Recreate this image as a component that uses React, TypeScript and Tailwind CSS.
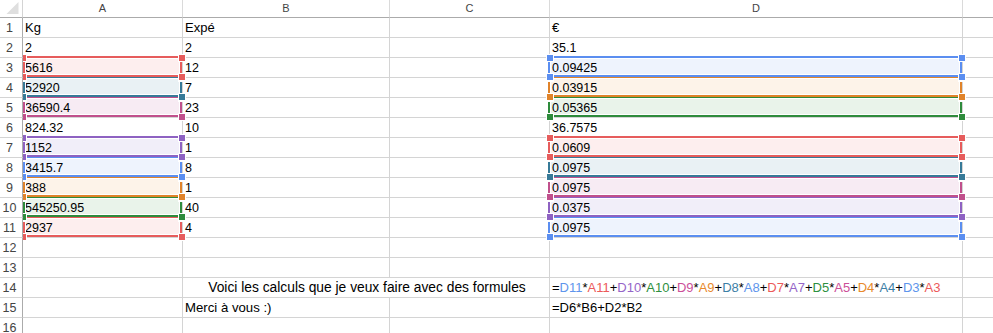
import React from "react";

type ColorKey = "red" | "teal" | "magenta" | "purple" | "blue" | "orange" | "green";

const COLORS: Record<ColorKey, { border: string; fill: string; handle: string; text: string }> = {
  red: { border: "border-[#e65c5c]", fill: "bg-[#fdeeee]", handle: "bg-[#e65c5c]", text: "text-[#ec5a5a]" },
  teal: { border: "border-[#377a98]", fill: "bg-[#e9f1f4]", handle: "bg-[#377a98]", text: "text-[#3d7fa6]" },
  magenta: { border: "border-[#c0508c]", fill: "bg-[#f7ebf3]", handle: "bg-[#c0508c]", text: "text-[#cc4f98]" },
  purple: { border: "border-[#8e62c2]", fill: "bg-[#f1eef9]", handle: "bg-[#8e62c2]", text: "text-[#9565c8]" },
  blue: { border: "border-[#5b8ef0]", fill: "bg-[#eef3fd]", handle: "bg-[#5b8ef0]", text: "text-[#5e95ec]" },
  orange: { border: "border-[#e0832a]", fill: "bg-[#fdf3e9]", handle: "bg-[#e0832a]", text: "text-[#e88a2c]" },
  green: { border: "border-[#2e8b3c]", fill: "bg-[#e9f3ea]", handle: "bg-[#2e8b3c]", text: "text-[#2e9040]" },
};

const Z: Record<number, string> = {
  3: "z-[19]",
  4: "z-[18]",
  5: "z-[17]",
  6: "z-[16]",
  7: "z-[15]",
  8: "z-[14]",
  9: "z-[13]",
  10: "z-[12]",
  11: "z-[11]",
};

type Row = {
  n: number;
  a?: string;
  b?: string;
  d?: string;
  ac?: ColorKey;
  dc?: ColorKey;
};

const ROWS: Row[] = [
  { n: 1, a: "Kg", b: "Expé", d: "€" },
  { n: 2, a: "2", b: "2", d: "35.1" },
  { n: 3, a: "5616", b: "12", d: "0.09425", ac: "red", dc: "blue" },
  { n: 4, a: "52920", b: "7", d: "0.03915", ac: "teal", dc: "orange" },
  { n: 5, a: "36590.4", b: "23", d: "0.05365", ac: "magenta", dc: "green" },
  { n: 6, a: "824.32", b: "10", d: "36.7575" },
  { n: 7, a: "1152", b: "1", d: "0.0609", ac: "purple", dc: "red" },
  { n: 8, a: "3415.7", b: "8", d: "0.0975", ac: "blue", dc: "teal" },
  { n: 9, a: "388", b: "1", d: "0.0975", ac: "orange", dc: "magenta" },
  { n: 10, a: "545250.95", b: "40", d: "0.0375", ac: "green", dc: "purple" },
  { n: 11, a: "2937", b: "4", d: "0.0975", ac: "red", dc: "blue" },
];

const FORMULA: [string, ColorKey | null][] = [
  ["=", null],
  ["D11", "blue"],
  ["*", null],
  ["A11", "red"],
  ["+", null],
  ["D10", "purple"],
  ["*", null],
  ["A10", "green"],
  ["+", null],
  ["D9", "magenta"],
  ["*", null],
  ["A9", "orange"],
  ["+", null],
  ["D8", "teal"],
  ["*", null],
  ["A8", "blue"],
  ["+", null],
  ["D7", "red"],
  ["*", null],
  ["A7", "purple"],
  ["+", null],
  ["D5", "green"],
  ["*", null],
  ["A5", "magenta"],
  ["+", null],
  ["D4", "orange"],
  ["*", null],
  ["A4", "teal"],
  ["+", null],
  ["D3", "blue"],
  ["*", null],
  ["A3", "red"],
];

function Box({ color, row, first }: { color: ColorKey; row: number; first: boolean }) {
  const c = COLORS[color];
  const leftHandle = first ? "-left-[5px]" : "-left-[3px]";
  const hs = `absolute h-[6px] w-[6px] ${c.handle} ring-1 ring-white`;
  return (
    <div
      className={`pointer-events-none absolute ${first ? "left-0" : "-left-[2px]"} -top-[2px] right-0 bottom-0 border-2 ${c.border} shadow-[inset_0_0_0_1px_#ffffff] ${Z[row]}`}
    >
      <span className={`${hs} ${leftHandle} -top-[3px]`} />
      <span className={`${hs} -right-[5px] -top-[3px]`} />
      <span className={`${hs} ${leftHandle} -bottom-[5px]`} />
      <span className={`${hs} -right-[5px] -bottom-[5px]`} />
    </div>
  );
}

const cellBase =
  "relative shrink-0 h-full flex items-end pl-[2px] pb-px leading-4 whitespace-nowrap border-r border-b border-[#d4d4d4]";

function isNum(s?: string) {
  return !!s && /^[0-9.]+$/.test(s);
}

function Cell({
  w,
  text,
  color,
  row,
  first,
}: {
  w: string;
  text?: string;
  color?: ColorKey;
  row: number;
  first?: boolean;
}) {
  const fill = color ? COLORS[color].fill : "";
  const size = isNum(text) ? "text-[12.5px]" : "text-[13px]";
  return (
    <div className={`${cellBase} ${w} ${fill} ${size}`}>
      {text}
      {color ? <Box color={color} row={row} first={!!first} /> : null}
    </div>
  );
}

function RowHeader({ n }: { n: number }) {
  return (
    <div className="relative z-30 w-[23px] shrink-0 h-full bg-white border-r border-b border-r-[#ababab] border-b-[#d4d4d4] flex items-end justify-center pr-[3px] pb-px text-[12.5px] leading-4 text-[#444444]">
      {n}
    </div>
  );
}

function Filler() {
  return <div className="flex-1 h-full border-b border-[#d4d4d4]" />;
}

function HeaderRow() {
  const cols: [string, string][] = [
    ["A", "w-[160px]"],
    ["B", "w-[207px]"],
    ["C", "w-[160px]"],
    ["D", "w-[413px]"],
  ];
  return (
    <div className="flex h-[18px]">
      <div className="relative w-[23px] shrink-0 h-full border-r border-b border-r-[#d4d4d4] border-b-[#ababab]">
        <svg width="22" height="17" viewBox="0 0 22 17" className="block">
          <polygon points="18.5,2 18.5,14 6.5,14" fill="#dfdfdf" />
        </svg>
      </div>
      {cols.map(([l, w]) => (
        <div
          key={l}
          className={`${w} shrink-0 h-full flex items-center justify-center border-r border-b border-r-[#dadada] border-b-[#ababab] text-[11px] leading-none text-[#444444]`}
        >
          {l}
        </div>
      ))}
      <div className="flex-1 h-full border-b border-b-[#ababab]" />
    </div>
  );
}

function EmptyRow({ n }: { n: number }) {
  return (
    <div className="flex h-[20px]">
      <RowHeader n={n} />
      <Cell w="w-[160px]" row={n} />
      <Cell w="w-[207px]" row={n} />
      <Cell w="w-[160px]" row={n} />
      <Cell w="w-[413px]" row={n} />
      <Filler />
    </div>
  );
}

export default function App() {
  return (
    <div className="w-[993px] h-[333px] overflow-hidden bg-white text-black font-['Liberation_Sans',Arial,sans-serif]">
      <HeaderRow />
      {ROWS.map((r) => (
        <div key={r.n} className="flex h-[20px]">
          <RowHeader n={r.n} />
          <Cell w="w-[160px]" text={r.a} color={r.ac} row={r.n} first />
          <Cell w="w-[207px]" text={r.b} row={r.n} />
          <Cell w="w-[160px]" row={r.n} />
          <Cell w="w-[413px]" text={r.d} color={r.dc} row={r.n} />
          <Filler />
        </div>
      ))}
      <EmptyRow n={12} />
      <EmptyRow n={13} />
      <div className="flex h-[20px]">
        <RowHeader n={14} />
        <Cell w="w-[160px]" row={14} />
        <div className={`${cellBase} w-[367px] justify-center pl-0 text-[13.8px]`}>
          Voici les calculs que je veux faire avec des formules
        </div>
        <div className={`${cellBase} w-[413px] text-[13px]`}>
          {FORMULA.map(([t, c], i) => (
            <span key={i} className={c ? COLORS[c].text : "text-black"}>
              {t}
            </span>
          ))}
        </div>
        <Filler />
      </div>
      <div className="flex h-[20px]">
        <RowHeader n={15} />
        <Cell w="w-[160px]" row={15} />
        <div className={`${cellBase} w-[207px] text-[13.2px]`}>Merci à vous :)</div>
        <Cell w="w-[160px]" row={15} />
        <div className={`${cellBase} w-[413px] text-[13px]`}>=D6*B6+D2*B2</div>
        <Filler />
      </div>
      <EmptyRow n={16} />
    </div>
  );
}
